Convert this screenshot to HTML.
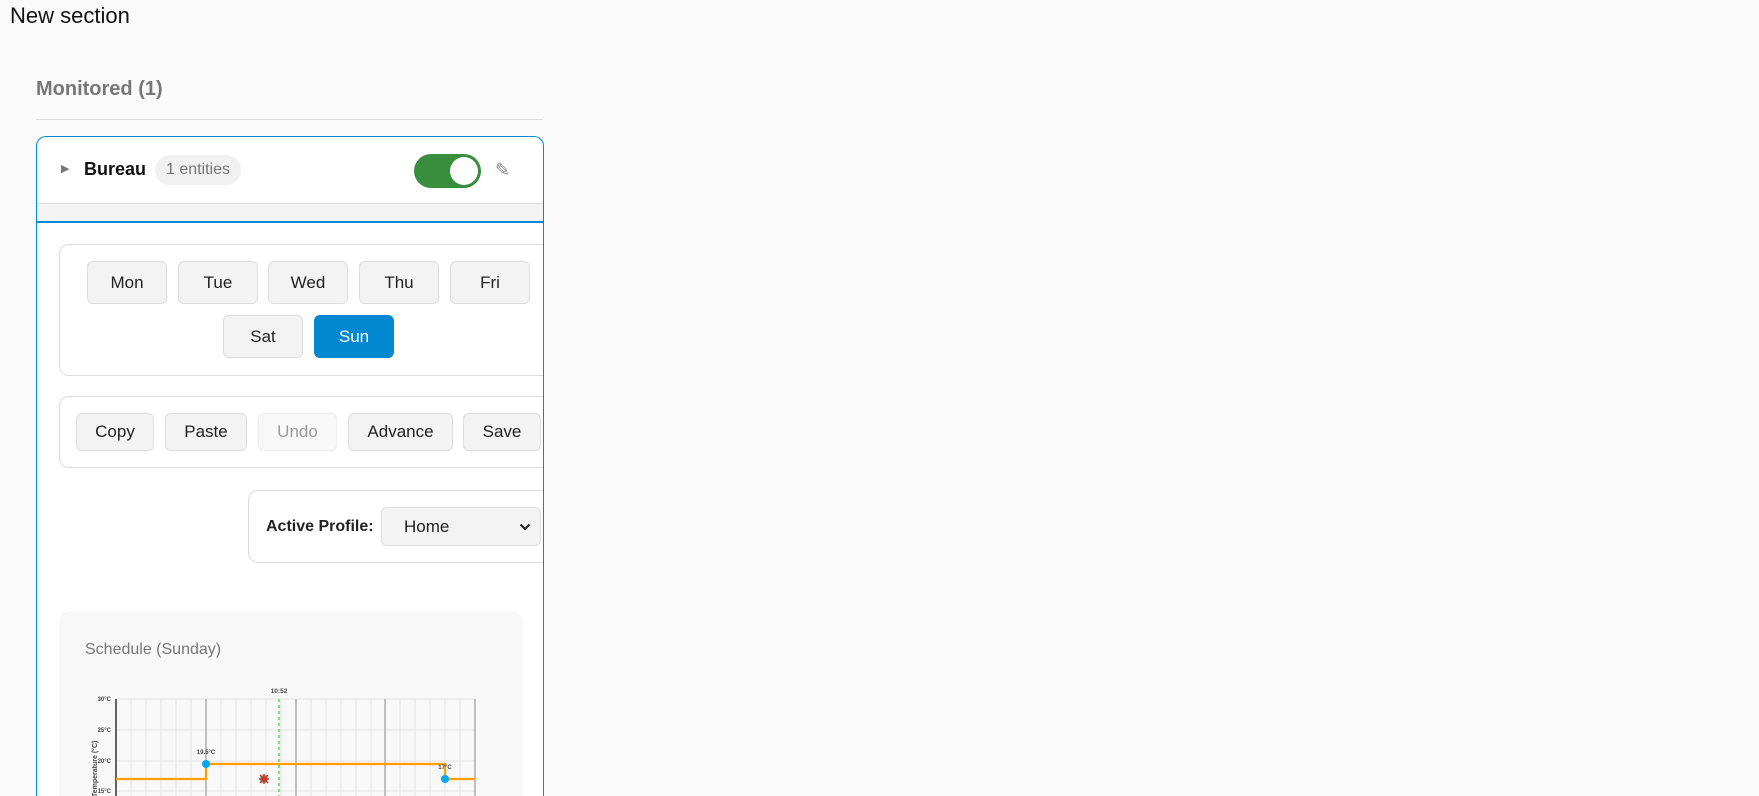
<!DOCTYPE html>
<html><head><meta charset="utf-8"><style>
*{box-sizing:border-box;margin:0;padding:0}
html{height:796px;overflow:hidden}
body{width:1759px;height:796px;overflow:hidden;background:#fafafa;font-family:"Liberation Sans",sans-serif;position:relative;color:#222}
.abs{position:absolute}
.btn{position:absolute;background:#f3f3f3;border:1px solid #ddd;border-radius:6px;font-size:17px;color:#222;display:flex;align-items:center;justify-content:center}
.box{position:absolute;background:#fff;border:1px solid #ddd;border-radius:10px}
</style></head><body>
<div class="abs" style="left:10px;top:3px;font-size:22px;color:#111">New section</div>
<div class="abs" style="left:36px;top:78px;font-size:20px;font-weight:bold;color:#777">Monitored (1)</div>
<div class="abs" style="left:36px;top:119px;width:507px;height:1px;background:#ddd"></div>
<div class="abs" style="left:36px;top:136px;width:508px;height:660px;border:1.5px solid #0288d1;border-bottom:none;border-radius:10px 10px 0 0;background:#fff;overflow:hidden">
  <div class="abs" style="left:0;top:66px;width:100%;height:18px;background:#f3f3f3;border-top:1px solid #ddd"></div>
  <div class="abs" style="left:0;top:84px;width:100%;height:2px;background:#0288d1"></div>
  <div class="abs" style="left:24px;top:25px;font-size:11px;color:#777">&#9654;</div>
  <div class="abs" style="left:47px;top:22px;font-size:18px;font-weight:bold;color:#111">Bureau</div>
  <div class="abs" style="left:118px;top:18px;width:86px;height:30px;border-radius:15px;background:#f1f1f1;color:#777;font-size:16px;text-align:center;line-height:30px">1 entities</div>
  <div class="abs" style="left:377px;top:17px;width:67px;height:34px;border-radius:17px;background:#388e3c"></div>
  <div class="abs" style="left:413px;top:20px;width:28px;height:28px;border-radius:50%;background:#fff"></div>
  <div class="abs" style="left:458px;top:23px;font-size:18px;color:#888">&#9998;</div>

  <div class="box" style="left:22px;top:107px;width:520px;height:132px"></div>
  <div class="btn" style="left:50px;top:124px;width:80px;height:43px">Mon</div>
  <div class="btn" style="left:141px;top:124px;width:80px;height:43px">Tue</div>
  <div class="btn" style="left:231px;top:124px;width:80px;height:43px">Wed</div>
  <div class="btn" style="left:322px;top:124px;width:80px;height:43px">Thu</div>
  <div class="btn" style="left:413px;top:124px;width:80px;height:43px">Fri</div>
  <div class="btn" style="left:186px;top:178px;width:80px;height:43px">Sat</div>
  <div class="btn" style="left:277px;top:178px;width:80px;height:43px;background:#0288d1;border-color:#0288d1;color:#fff">Sun</div>

  <div class="box" style="left:22px;top:259px;width:520px;height:72px"></div>
  <div class="btn" style="left:39px;top:276px;width:78px;height:38px">Copy</div>
  <div class="btn" style="left:128px;top:276px;width:82px;height:38px">Paste</div>
  <div class="btn" style="left:221px;top:276px;width:79px;height:38px;background:#f8f8f8;border-color:#eee;color:#999">Undo</div>
  <div class="btn" style="left:311px;top:276px;width:105px;height:38px">Advance</div>
  <div class="btn" style="left:426px;top:276px;width:78px;height:38px">Save</div>

  <div class="box" style="left:211px;top:353px;width:330px;height:73px"></div>
  <div class="abs" style="left:229px;top:381px;font-size:16px;font-weight:bold;color:#222">Active Profile:</div>
  <div class="btn" style="left:344px;top:370px;width:160px;height:39px;justify-content:flex-start;padding-left:22px">Home
    <svg style="position:absolute;right:9px;top:15px" width="12" height="8" viewBox="0 0 12 8"><path d="M1.5 1.5 L6 6 L10.5 1.5" fill="none" stroke="#222" stroke-width="2"/></svg></div>

  <div class="abs" style="left:22px;top:474px;width:464px;height:300px;background:#f8f8f8;border-radius:12px"></div>
  <div class="abs" style="left:48px;top:504px;font-size:16px;color:#777">Schedule (Sunday)</div>
  <svg class="abs" style="left:0;top:0" width="508" height="700" viewBox="36 136 508 700">
    <g stroke="#e4e4e4" stroke-width="1">
      <line x1="115" y1="698" x2="474" y2="698"/><line x1="115" y1="729" x2="474" y2="729"/><line x1="115" y1="760" x2="474" y2="760"/><line x1="115" y1="790" x2="474" y2="790"/>
      <line x1="130" y1="698" x2="130" y2="796"/><line x1="145" y1="698" x2="145" y2="796"/><line x1="160" y1="698" x2="160" y2="796"/><line x1="175" y1="698" x2="175" y2="796"/><line x1="190" y1="698" x2="190" y2="796"/>
      <line x1="220" y1="698" x2="220" y2="796"/><line x1="235" y1="698" x2="235" y2="796"/><line x1="250" y1="698" x2="250" y2="796"/><line x1="265" y1="698" x2="265" y2="796"/><line x1="280" y1="698" x2="280" y2="796"/>
      <line x1="310" y1="698" x2="310" y2="796"/><line x1="325" y1="698" x2="325" y2="796"/><line x1="340" y1="698" x2="340" y2="796"/><line x1="355" y1="698" x2="355" y2="796"/><line x1="370" y1="698" x2="370" y2="796"/>
      <line x1="399" y1="698" x2="399" y2="796"/><line x1="414" y1="698" x2="414" y2="796"/><line x1="429" y1="698" x2="429" y2="796"/><line x1="444" y1="698" x2="444" y2="796"/><line x1="459" y1="698" x2="459" y2="796"/>
    </g>
    <g stroke="#999" stroke-width="1.2">
      <line x1="205" y1="698" x2="205" y2="796"/><line x1="295" y1="698" x2="295" y2="796"/><line x1="384" y1="698" x2="384" y2="796"/><line x1="474" y1="698" x2="474" y2="796"/>
    </g>
    <line x1="115" y1="698" x2="115" y2="796" stroke="#333" stroke-width="1.5"/>
    <line x1="278" y1="698" x2="278" y2="796" stroke="#7de07d" stroke-width="2" stroke-dasharray="3,3"/>
    <polyline points="115,778 205,778 205,763 444,763 444,778 474,778" fill="none" stroke="#ffa000" stroke-width="2.2"/>
    <circle cx="205" cy="763" r="4" fill="#03a9f4"/><circle cx="444" cy="778" r="4" fill="#03a9f4"/>
    <circle cx="263" cy="778" r="4" fill="#4caf50"/>
    <path d="M259 774 L267 782 M267 774 L259 782 M263 773 V783 M258 778 H268" stroke="#d32f2f" stroke-width="1.5"/>
    <g font-family="Liberation Sans" font-size="6" fill="#444" font-weight="bold">
      <text x="278" y="692" text-anchor="middle" font-size="6.5">10:52</text>
      <text x="110" y="700" text-anchor="end">30°C</text><text x="110" y="731" text-anchor="end">25°C</text><text x="110" y="762" text-anchor="end">20°C</text><text x="110" y="792" text-anchor="end">15°C</text>
      <text x="205" y="753" text-anchor="middle">19.5°C</text><text x="444" y="768" text-anchor="middle">17°C</text>
      <text transform="translate(96,796) rotate(-90)" font-size="7">Temperature (°C)</text>
    </g>
  </svg>
</div>
</body></html>
